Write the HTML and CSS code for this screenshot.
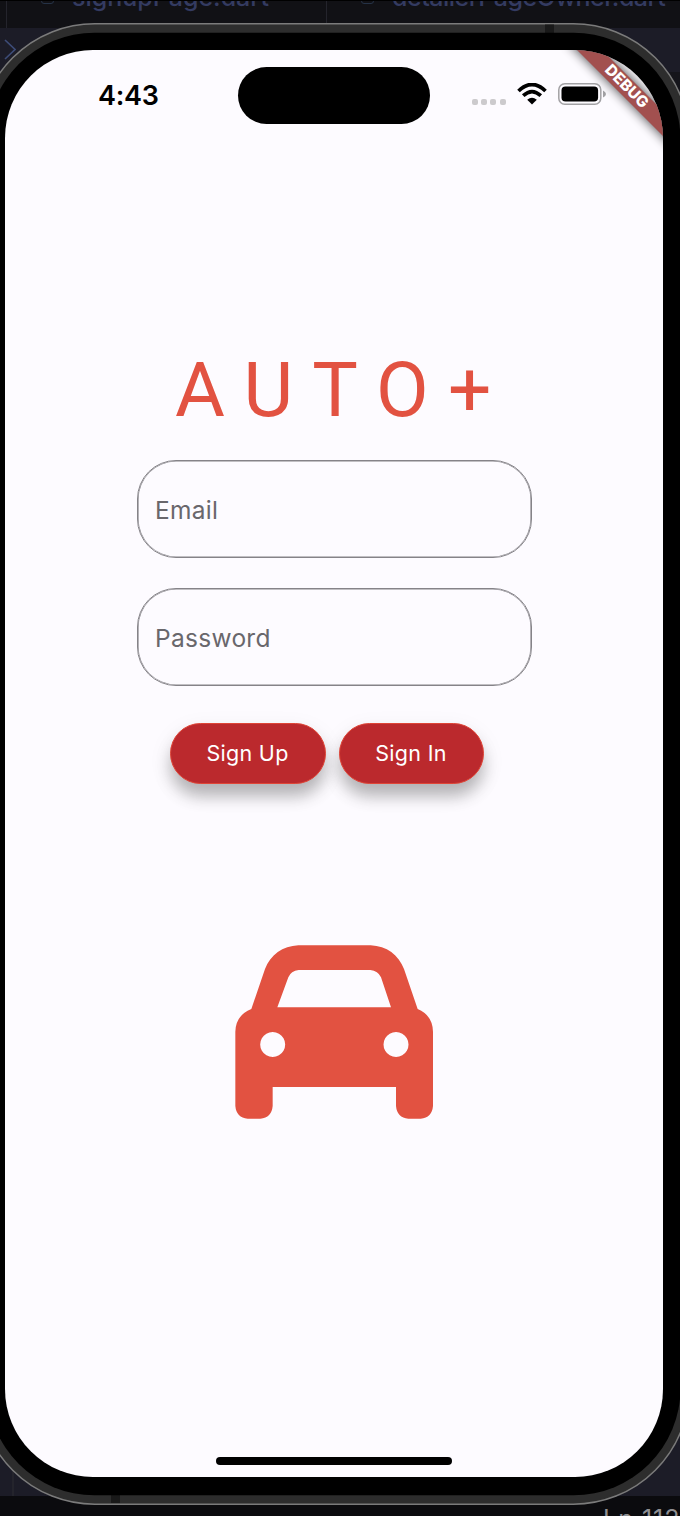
FILE: index.html
```html
<!DOCTYPE html>
<html lang="en">
<head>
<meta charset="utf-8">
<title>AUTO+</title>
<link rel="stylesheet" href="styles.css">
</head>
<body>
<div class="desktop">
  <div class="editor-tabs">
    <span class="tab tab-first"><i class="file-icon"></i><b>signupPage.dart</b></span>
    <span class="tab tab-second"><i class="file-icon"></i><b>detailerPageOwner.dart</b></span>
  </div>
  <svg class="chevron" viewBox="0 0 12 22"><path d="M1 1L11 10.500L1 20" fill="none" stroke="#3d4c78" stroke-width="1.600"/></svg>
  <div class="editor-status">Ln 112</div>
  <svg class="device" viewBox="0 0 680 1516">
    <path fill="#24242c" d="M6 1h1v27h-1zM326 1h1v27h-1zM12 1440h2v56h-2z"/>
    <rect x="-21.300" y="23.800" width="710.600" height="1480.400" rx="116" fill="#2d2d2d" stroke="#7b7b7b" stroke-width="1.500"/>
    <path fill="#191919" d="M545 24.500h9v9h-9zM111 1494h9v9h-9z"/>
    <rect x="-12.500" y="32.700" width="693" height="1462.600" rx="107"/>
    <rect x="5" y="50" width="658" height="1427" rx="88" fill="#fdfbff"/>
  </svg>
  <main class="screen">
    <header class="status-bar">
      <time>4:43</time>
      <div class="island"></div>
      <div class="indicators">
        <div class="signal"><i></i><i></i><i></i><i></i></div>
        <svg class="wifi" viewBox="0 0 30 22">
          <path d="M1.500 8Q15 -5 28.500 8M6.200 12.700Q15 4.500 23.800 12.700" fill="none" stroke="#000" stroke-width="3.700"/>
          <path d="M10.200 16.800Q15 12.700 19.800 16.800L15 21.500Z"/>
        </svg>
        <svg class="battery" viewBox="0 0 48 22">
          <rect x=".8" y=".8" width="42" height="20.400" rx="6" fill="none" stroke="#a2a1a4" stroke-width="1.500"/>
          <rect x="3.500" y="3.500" width="36.600" height="15" rx="4"/>
          <path d="M45 7.500Q48 9 48 11T45 14.500Z" fill="#a2a1a4"/>
        </svg>
      </div>
    </header>
    <section class="login">
      <h1>AUTO+</h1>
      <div class="field">Email</div>
      <div class="field">Password</div>
      <div class="actions">
        <button class="sign-up">Sign Up</button>
        <button class="sign-in">Sign In</button>
      </div>
    </section>
    <svg class="car" viewBox="45 45 594 522">
      <path fill="#e25241" fill-rule="evenodd" d="M235 46H452C500 48 536 75 552 117L593 237Q638 256 639 305V528Q636 563 602 566H565Q531 563 528 528V471H158V528Q155 563 121 566H83Q49 563 46 528V305Q47 256 94 237L135 117C151 75 188 48 235 46ZM236 120Q213 122 205 142L172 232H513L483 142Q474 122 451 120ZM158 306a37.500 37.500 0 1 0 .1 0ZM528 306a37.500 37.500 0 1 0 .1 0Z"/>
    </svg>
    <div class="home-indicator"></div>
  </main>
  <svg class="debug" viewBox="0 0 120 130">
    <defs>
      <clipPath id="corner"><rect x="-555" y="20" width="658" height="1427" rx="88"/></clipPath>
      <filter id="blur" x="-30%" y="-30%" width="160%" height="160%"><feGaussianBlur stdDeviation="6"/></filter>
    </defs>
    <g clip-path="url(#corner)">
      <path d="M7 10L32 10L140 118L140 143Z" opacity=".75" filter="url(#blur)"/>
      <path d="M7 10L32 10L140 118L140 143Z" fill="#a2504f"/>
      <text x="67" y="56" transform="rotate(45 67 56)" text-anchor="middle" dominant-baseline="central">DEBUG</text>
    </g>
  </svg>
</div>
</body>
</html>
```
FILE: styles.css
```css
* { box-sizing: border-box; }
body { margin: 0; background: #14141a; }
.desktop {
  position: relative; width: 680px; height: 1516px; overflow: hidden;
  background: linear-gradient(#111115 0 28px, #1c1c27 28px 72px, #15151b 72px 1420px, #1c1c27 1420px 1496px, #0b0b0e 1496px);
  font-family: Inter, "Noto Sans", sans-serif;
}
.editor-tabs { position: absolute; top: 0; left: 0; width: 680px; height: 28px; overflow: hidden; border-top: 1px solid #000; }
.tab { position: absolute; top: -19px; display: flex; gap: 18px; color: #343b61; font-size: 25px; line-height: 30px; white-space: nowrap; }
.tab b { font-weight: 500; }
.tab-first { left: 41px; }
.tab-second { left: 361px; letter-spacing: -.5px; }
.file-icon { width: 13px; height: 14px; margin-top: 8px; border: 1px solid #253246; border-radius: 3px; }
.chevron { position: absolute; left: 4px; top: 39px; width: 12px; height: 22px; }
.editor-status { position: absolute; left: 603px; top: 1504px; font-size: 25px; line-height: 30px; letter-spacing: 1px; color: #8f8f92; white-space: nowrap; }
.device { position: absolute; inset: 0; width: 680px; height: 1516px; }
.screen {
  position: relative; width: 658px; height: 1427px; margin-left: 5px; top: 50px;
  display: flex; flex-direction: column; align-items: center;
}
.status-bar { width: 100%; height: 90px; display: grid; grid-template-columns: 233px 192px 1fr; padding-top: 17px; }
time { padding: 1px 0 0 93px; font-size: 27px; font-weight: 600; line-height: 56px; letter-spacing: -.3px; }
.island { height: 57px; border-radius: 29px; background: #000; }
.indicators { display: flex; padding: 16px 0 0 42px; }
.signal { display: flex; gap: 3.200px; width: 45px; padding-top: 16px; }
.signal i { width: 6px; height: 6px; border-radius: 2px; background: #cccacd; }
.wifi { width: 30px; height: 22px; margin-right: 11px; }
.battery { width: 48px; height: 22px; }
.login { width: 395px; display: flex; flex-direction: column; padding-top: 205px; }
h1 { margin: 0 0 25px; padding-left: 38.500px; font: 400 76.500px/90px Roboto, sans-serif; letter-spacing: 19.200px; color: #e25241; white-space: nowrap; }
.field {
  height: 98px; margin-bottom: 30.300px; padding-left: 17.500px;
  border: 1px solid #858388; border-radius: 39px; box-shadow: inset 0 0 0 .6px #858388;
  font-size: 24.500px; line-height: 98px; letter-spacing: .3px; color: #69676c;
}
.actions { display: flex; gap: 13px; padding: 6px 0 0 33px; }
button {
  height: 61px; padding: 0 0 1px; border: 1.500px solid #df4537; border-radius: 31px;
  background: #bb292d; color: #fff; font: 400 21.500px Inter, sans-serif; letter-spacing: .3px;
  box-shadow: 0 13px 16px -1px rgba(0,0,0,.25), 0 8px 24px rgba(0,0,0,.08);
}
.sign-up { width: 156px; }
.sign-in { width: 145px; }
.car { width: 198px; height: 174px; margin-top: 161px; }
.home-indicator { width: 236px; height: 8px; margin: auto 0 12px; border-radius: 4px; background: #000; }
.debug { position: absolute; left: 560px; top: 30px; width: 120px; height: 130px; }
.debug text { fill: #fff; font: 800 15.500px Inter, sans-serif; }
```
